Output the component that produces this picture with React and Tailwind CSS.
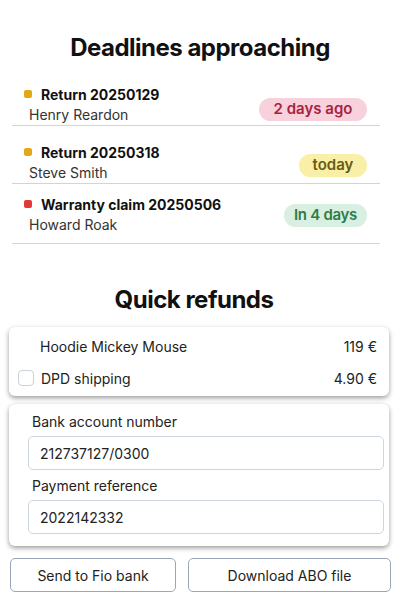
import React from "react";

const font = { fontFamily: "Inter, 'Noto Sans', sans-serif" };

function Row({ color, title, name, badge, badgeCls, rowCls, badgeMb }) {
  return (
    <div className={`flex items-end justify-between border-b border-[#cdd5e0] ${rowCls}`}>
      <div className="flex flex-col">
        <div className="flex h-5 items-center pl-3">
          <span className={`mr-[9px] inline-block h-2 w-2 rounded-[2px] ${color}`} />
          <span className="text-[14px] font-bold text-[#111]">{title}</span>
        </div>
        <div className="mt-[1px] h-5 pl-[17px] text-[14px] leading-5 text-[#333]">{name}</div>
      </div>
      <span className={`mr-[13px] flex h-[23px] items-center justify-center rounded-full text-[15px] font-semibold ${badgeCls} ${badgeMb}`}>
        {badge}
      </span>
    </div>
  );
}

export default function App() {
  return (
    <div className="h-[600px] w-[400px] bg-white" style={font}>
      <h1 className="pt-8 text-center text-[24px] font-bold leading-8 tracking-[-0.5px] text-[#111]">
        Deadlines approaching
      </h1>
      <div className="ml-3 mt-5 w-[368px]">
        <Row
          color="bg-[#e4a817]"
          title="Return 20250129"
          name="Henry Reardon"
          badge="2 days ago"
          badgeCls="w-[108px] bg-[#f7d1dc] text-[#a8233f]"
          rowCls="pb-0"
          badgeMb="mb-1"
        />
        <Row
          color="bg-[#e4a817]"
          title="Return 20250318"
          name="Steve Smith"
          badge="today"
          badgeCls="w-[68px] bg-[#f9efa6] text-[#6a5a12]"
          rowCls="pt-4"
          badgeMb="mb-[6px]"
        />
        <Row
          color="bg-[#e23838]"
          title="Warranty claim 20250506"
          name="Howard Roak"
          badge="In 4 days"
          badgeCls="w-[83px] bg-[#d9efe2] text-[#2e7d45] tracking-[-0.3px]"
          rowCls="pt-[10px] pb-2"
          badgeMb="mb-2"
        />
      </div>
      <h2 className="mt-10 pr-3 text-center text-[24px] font-bold leading-8 tracking-[-0.5px] text-[#111]">
        Quick refunds
      </h2>
      <div className="ml-[9px] mt-[11px] w-[380px] rounded-md bg-white pb-[8px] pt-[9px] shadow-[0_2px_5px_rgba(0,0,0,0.4)]">
        <div className="flex h-5 items-center justify-between pl-[31px] pr-3 text-[14px] text-[#222]">
          <span>Hoodie Mickey Mouse</span>
          <span>119 €</span>
        </div>
        <div className="mt-3 flex h-5 items-center justify-between pl-[9px] pr-3 text-[14px] text-[#222]">
          <div className="flex items-center">
            <span className="mr-[7px] inline-block h-4 w-4 rounded-[4px] border border-[#c9d1dd] bg-white" />
            <span>DPD shipping</span>
          </div>
          <span>4.90 €</span>
        </div>
      </div>
      <div className="ml-[9px] mt-2 w-[380px] rounded-md bg-white pb-3 pl-[19px] pr-[5px] pt-[8px] shadow-[0_2px_5px_rgba(0,0,0,0.4)]">
        <div className="h-5 pl-1 text-[14px] leading-5 text-[#222]">Bank account number</div>
        <div className="mt-[4px] flex h-[34px] items-center rounded-[5px] border border-[#cdd5e0] px-[11px] text-[14px] text-[#222]">
          212737127/0300
        </div>
        <div className="mt-[6px] h-5 pl-1 text-[14px] leading-5 text-[#222]">Payment reference</div>
        <div className="mt-[4px] flex h-[34px] items-center rounded-[5px] border border-[#cdd5e0] px-[11px] text-[14px] text-[#222]">
          2022142332
        </div>
      </div>
      <div className="ml-[10px] mt-3 flex gap-3">
        <button className="flex h-[34px] w-[166px] items-center justify-center rounded-[5px] border border-[#9aa6b8] bg-white text-[14px] text-[#222]">
          Send to Fio bank
        </button>
        <button className="flex h-[34px] w-[203px] items-center justify-center rounded-[5px] border border-[#9aa6b8] bg-white text-[14px] text-[#222]">
          Download ABO file
        </button>
      </div>
    </div>
  );
}
